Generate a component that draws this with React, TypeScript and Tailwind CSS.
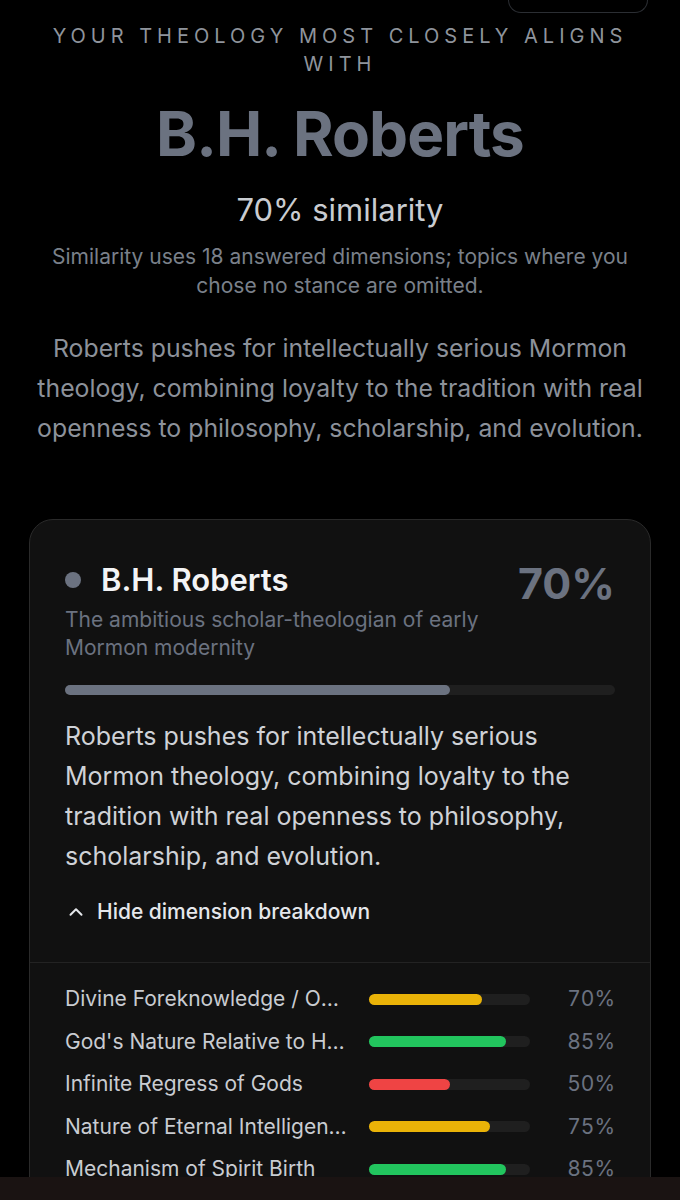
import React from "react";
import { ChevronUp } from "lucide-react";

const rows = [
  { label: "Divine Foreknowledge / Omniscience", pct: 70, color: "bg-[#eab308]" },
  { label: "God's Nature Relative to Humanity", pct: 85, color: "bg-[#22c55e]" },
  { label: "Infinite Regress of Gods", pct: 50, color: "bg-[#ef4444]" },
  { label: "Nature of Eternal Intelligences", pct: 75, color: "bg-[#eab308]" },
  { label: "Mechanism of Spirit Birth", pct: 85, color: "bg-[#22c55e]" },
  { label: "Eternal Progression", pct: 85, color: "bg-[#22c55e]" },
  { label: "Authority of Scripture", pct: 70, color: "bg-[#eab308]" },
];

export default function App() {
  return (
    <div
      className="min-h-screen bg-black text-white pb-20"
      style={{ fontFamily: "Inter, 'Noto Sans', sans-serif" }}
    >
      <div className="flex justify-end pr-[32px]">
        <div className="w-[140px] h-[13px] border border-t-0 border-[#2b2e33] rounded-b-[16px]" />
      </div>

      <div className="px-8 text-center">
        <div className="mt-[9px] text-[20px] leading-[28px] tracking-[0.25em] uppercase text-[#8f949c]">
          Your theology most closely aligns with
        </div>
        <h1 className="mt-[25px] text-[62px] leading-none font-bold tracking-[-0.015em] text-[#6b7280]">
          B.H. Roberts
        </h1>
        <div className="mt-[27px] text-[31px] leading-[36px] text-[#c9ccd1]">70% similarity</div>
        <p className="mt-[14px] text-[21px] leading-[29px] text-[#7a808a]">
          Similarity uses 18 answered dimensions; topics where you chose no stance are omitted.
        </p>
        <p className="mt-[28px] text-[24.8px] leading-[40px] text-[#8c919a]">
          Roberts pushes for intellectually serious Mormon theology, combining loyalty to the
          tradition with real openness to philosophy, scholarship, and evolution.
        </p>
      </div>

      <div className="mx-[29px] mt-[71px] rounded-[24px] border border-[#2a2a2a] bg-[#111111] overflow-hidden">
        <div className="px-[35px] pt-10 pb-9">
          <div className="flex items-start justify-between">
            <div>
              <div className="flex items-center gap-[20px]">
                <span className="w-[16px] h-[16px] rounded-full bg-[#6b7280] shrink-0" />
                <span className="text-[31px] leading-[40px] font-semibold text-[#f3f4f6]">
                  B.H. Roberts
                </span>
              </div>
              <div className="mt-[6px] text-[21px] leading-[28px] text-[#6b7280] max-w-[440px]">
                The ambitious scholar-theologian of early Mormon modernity
              </div>
            </div>
            <div className="text-[43px] leading-[48px] font-bold text-[#6b7280] -mt-[1px]">70%</div>
          </div>

          <div className="mt-[23px] h-[10px] rounded-full bg-[#1f1f1f]">
            <div className="h-full rounded-full bg-[#6b7280]" style={{ width: "70%" }} />
          </div>

          <p className="mt-[21px] text-[25px] leading-[40px] text-[#cfd2d7]">
            Roberts pushes for intellectually serious Mormon theology, combining loyalty to the
            tradition with real openness to philosophy, scholarship, and evolution.
          </p>

          <div className="mt-[22px] flex items-center gap-[10px] text-[21px] leading-[28px] font-medium text-[#e5e7eb]">
            <ChevronUp size={22} strokeWidth={2.2} />
            <span>Hide dimension breakdown</span>
          </div>
        </div>

        <div className="border-t border-[#232323] px-[35px] pt-[22px] pb-8 flex flex-col gap-[14.5px]">
          {rows.map((r) => (
            <div key={r.label} className="flex items-center h-[28px]">
              <div className="flex-1 min-w-0 truncate text-[21px] leading-[28px] text-[#c9ccd1]">
                {r.label}
              </div>
              <div className="ml-5 w-[161px] h-[11px] rounded-full bg-[#1f1f1f] shrink-0">
                <div className={`h-full rounded-full ${r.color}`} style={{ width: `${r.pct}%` }} />
              </div>
              <div className="w-[85px] shrink-0 text-right text-[21px] leading-[28px] text-[#6b7280] tabular-nums">
                {r.pct}%
              </div>
            </div>
          ))}
        </div>
      </div>

      <div className="fixed bottom-0 left-0 right-0 h-[23px] bg-[#1a1312]" />
    </div>
  );
}
